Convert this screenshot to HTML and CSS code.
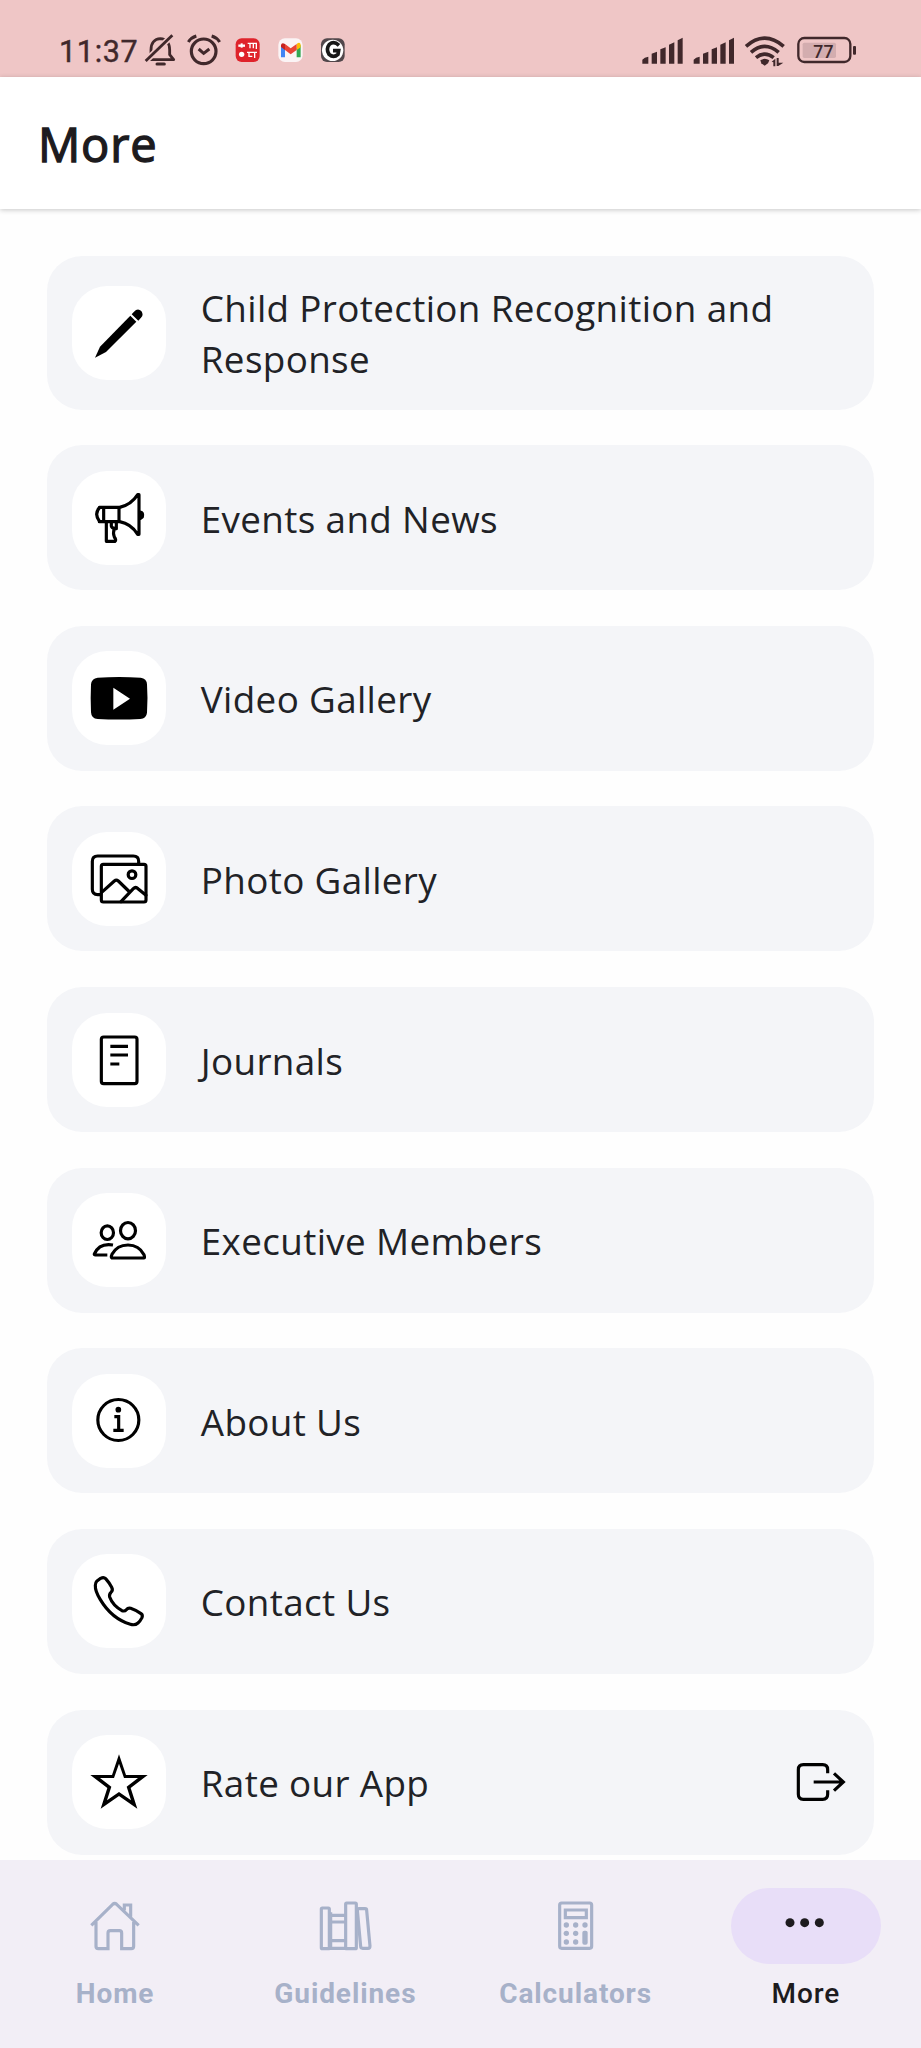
FILE: index.html
```html
<!DOCTYPE html>
<html lang="en">
<head>
<meta charset="utf-8">
<title>More</title>
<link rel="stylesheet" href="styles.css">
</head>
<body>
<div class="screen">
  <div class="status">
    <div class="status-left">
      <span class="clock">11:37</span>
      <svg class="status-icons" viewBox="310 0 620 171" width="206.67" height="57">
        <g fill="none" stroke="#40282b" stroke-width="8.5">
          <path d="M334 116V90c0-20 10-33 28-34 18 1 28 14 28 34v14l12 15H330" stroke-linejoin="round"/>
          <path d="M318 123L398 46" stroke="#efc6c6" stroke-width="18"/>
          <path d="M318 123L398 46"/>
          <path d="M352 132h22" stroke-width="9" stroke-linecap="round"/>
          <circle cx="492" cy="94" r="37" stroke-width="9.5"/>
          <path d="M477 87l15 13 17-13" stroke-width="9"/>
          <path d="M446 66q8-13 24-18M540 66q-8-13-24-18" stroke-width="9"/>
        </g>
        <rect x="588" y="55" width="72" height="71" rx="18" fill="#df232b"/>
        <g fill="none" stroke="#fff" stroke-width="4"><path d="M596 77h20" stroke-width="7"/><path d="M606 70v13" stroke-width="6"/><path d="M624 70h28M631 70v15M641 70v15M650 70v17M622 97h30M628 97v12h10M645 97v17"/></g>
        <circle cx="606" cy="103" r="8" fill="#fff"/>
        <rect x="716" y="55" width="73" height="71" rx="20" fill="#fbf4f5"/>
        <path d="M724 75v37h12V84z" fill="#4285f4"/><path d="M771 84v28h12V75z" fill="#34a853"/><path d="M771 72v18l12-8v-8q-2-10-12-2z" fill="#fbbc04"/><path d="M736 72v18l17 13 18-13V72l-18 13z" fill="#ea4335"/><path d="M724 75q2-9 12-3v18l-12-9z" fill="#c5221f"/>
        <rect x="844" y="55" width="71" height="71" rx="18" fill="#51474b"/>
        <circle cx="879" cy="91" r="32" fill="#fff"/>
        <path d="M898 76q-15-14-29-3-11 14-1 30 14 12 27 0l2-11h-17" fill="none" stroke="#171717" stroke-width="11"/>
      </svg>
    </div>
    <div class="status-right">
      <svg viewBox="60 0 660 171" width="220" height="57">
        <g fill="#40282b">
          <path d="M67 131v-12q6-8 18-9v21zM95 131v-30l16-6v36zM121 131V88l16-6v49zM147 131V74l16-7v64zM173 131V61l15-8v78z"/>
          <path d="M221 131v-12q6-8 18-9v21zM249 131v-30l16-6v36zM275 131V88l16-6v49zM301 131V74l16-7v64zM327 131V61l15-8v78z"/>
          <path d="M421 121q13-9 27 0l-4 9-10 7-10-7z"/>
          <path d="M455 125l11-9v23h-6v-12zM470 114h6v14h14l-15 10h-5z"/>
        </g>
        <g fill="none" stroke="#40282b" stroke-width="11">
          <path d="M378 79q56-49 113 0M393 97q41-36 83 0M408 113q26-21 53 0"/>
          <rect x="535" y="54" width="156" height="72" rx="18" stroke-width="7"/>
        </g>
        <rect x="548" y="68" width="100" height="46" rx="5" fill="#d3adaf"/>
        <rect x="699" y="78" width="9" height="26" rx="3" fill="#40282b"/>
        <text class="battery" x="580" y="113" textLength="61">77</text>
      </svg>
    </div>
  </div>

  <header class="header"><h1 class="title">More</h1></header>

  <main class="list">
    <div class="card">
      <svg class="tile" viewBox="216 589 282 282"><path d="M285 804l15-33 91-93 18 18-91 91z"/><path d="M395 674l7-8q11-12 22-2 8 12-1 20l-8 9z"/></svg>
      <span class="label">Child Protection Recognition and Response</span>
    </div>
    <div class="card">
      <svg class="tile line" viewBox="67 90 282 282"><path d="M149 199h63M149 242h63M162 199v43M208 199v43M150 199q-18 20 0 43M210 199q34-7 54-38h4v119h-4q-20-32-54-38"/><path d="M272 213q9 1 6 15l-6 4z"/><path d="M170 243v58h26q5-3-2-13-5-12 0-25h6v-21M185 243v12q1 7 12 7"/></svg>
      <span class="label">Events and News</span>
    </div>
    <div class="card">
      <svg class="tile" viewBox="67 632 282 282"><path fill-rule="evenodd" d="M144 712Q208 708 273 712q18 2 19 20 3 43 0 85-2 18-20 19-64 3-128 0-19-1-20-20-2-42 0-84 2-18 20-20zM191 742v66l50-33z"/></svg>
      <span class="label">Video Gallery</span>
    </div>
    <div class="card">
      <svg class="tile line" viewBox="67 94 282 282"><path d="M267 189v-7q0-16-16-16H144q-16 0-16 16v84q0 16 16 16h9"/><rect x="155" y="191" width="134" height="113" rx="6"/><circle cx="247" cy="222" r="11.5"/><path d="M156 275l38-34q6-5 12 0l34 33M214 303l37-39q7-7 14 0l24 20"/></svg>
      <span class="label">Photo Gallery</span>
    </div>
    <div class="card">
      <svg class="tile line" viewBox="67 635 282 282"><rect x="155" y="707" width="107" height="140" rx="7"/><path stroke-linecap="butt" d="M182 735h53M182 761h53M182 788h27"/></svg>
      <span class="label">Journals</span>
    </div>
    <div class="card">
      <svg class="tile line" viewBox="67 98 282 282"><ellipse cx="173" cy="217" rx="18.5" ry="20.5"/><ellipse cx="235" cy="211" rx="22.5" ry="24.5"/><path d="M187 293q-4-2 0-11 15-28 48-28t48 29q3 10 0 10zM190 254q-41-7-56 27-1 3 3 3h36" stroke-linecap="butt"/></svg>
      <span class="label">Executive Members</span>
    </div>
    <div class="card">
      <svg class="tile line" viewBox="67 642 282 282"><circle cx="206" cy="780" r="61.5"/><circle cx="206" cy="749" r="8.5" fill="#000" stroke="none"/><path d="M194 770h13v40M191 811h31" stroke-linecap="butt" stroke-linejoin="miter"/></svg>
      <span class="label">About Us</span>
    </div>
    <div class="card">
      <svg class="tile line" viewBox="67 102 282 282"><path d="M141 184l12-9q9-5 15 1 10 11 18 26 5 9-2 15-6 6-4 14 9 25 37 41 8 3 13-3 5-6 13-4 15 5 31 16 6 4 3 12-5 10-12 16-9 8-23 4-56-17-90-74-16-26-15-43 0-8 4-12z"/></svg>
      <span class="label">Contact Us</span>
    </div>
    <div class="card">
      <svg class="tile" viewBox="67 645 282 282"><path fill-rule="evenodd" d="M208 703l21 62h65l-51 39 20 62-55-38-55 38 20-62-51-39h65zM208 731l-15 43h-42l34 26-13 41 36-25 36 25-13-41 34-26h-42z"/></svg>
      <span class="label">Rate our App</span>
      <svg class="exit" viewBox="1010 185 150 120"><path d="M1105 219v-11q0-15-15-15h-58q-15 0-15 15v74q0 15 15 15h58q15 0 15-15v-12M1063 245h89M1124 219l28 26-28 26"/></svg>
    </div>
  </main>

  <nav class="nav">
    <div class="nav-item">
      <span class="pill"><svg viewBox="265 150 160 160" width="53.33" height="53.33"><path d="M275 229l64-63q6-5 12 0l66 63M289 219v73q0 7 7 7h29v-47q0-7 7-7h27q7 0 7 7v47h29q7 0 7-7v-73M374 184v-16h19v35"/></svg></span>
      <span class="nav-label">Home</span>
    </div>
    <div class="nav-item">
      <span class="pill"><svg viewBox="956 150 160 160" width="53.33" height="53.33"><rect x="963" y="177" width="24" height="122" rx="3"/><path d="M989 199h46M989 219h46M989 275h46M989 298h46M991 190v108"/><rect x="1036" y="162" width="32" height="137" rx="3"/><path d="M1071 183q0-4 5-4h18q5 0 5 5l10 107q0 7-6 7h-16q-6 0-6-6z"/></svg></span>
      <span class="nav-label">Guidelines</span>
    </div>
    <div class="nav-item">
      <span class="pill"><svg viewBox="267 600 160 160" width="53.33" height="53.33"><rect x="299" y="612" width="96" height="136" rx="6"/><path d="M316 633h63v23h-63z"/><g fill="#a7b1c9" stroke="none"><circle cx="319" cy="678" r="8"/><circle cx="347" cy="678" r="8"/><circle cx="375" cy="678" r="8"/><circle cx="319" cy="703" r="8"/><circle cx="347" cy="703" r="8"/><circle cx="319" cy="729" r="8"/><circle cx="347" cy="729" r="8"/><rect x="367" y="695" width="16" height="42" rx="6"/></g></svg></span>
      <span class="nav-label">Calculators</span>
    </div>
    <div class="nav-item active">
      <span class="pill"><svg viewBox="957 597 160 160" width="53.33" height="53.33"><circle cx="990" cy="668" r="13.5"/><circle cx="1034" cy="668" r="13.5"/><circle cx="1078" cy="668" r="13.5"/></svg></span>
      <span class="nav-label">More</span>
    </div>
  </nav>
</div>
</body>
</html>
```
FILE: styles.css
```css
* { box-sizing: border-box; }
body { margin: 0; background: #fff; }
svg { display: block; flex: none; }
.screen { width: 921px; height: 2048px; display: flex; flex-direction: column; overflow: hidden; background: #fefefe; }

.status { height: 77px; flex: none; display: flex; justify-content: space-between; align-items: flex-start; padding: 20px 61px 0 59px; background: #efc6c6; }
.status-left { display: flex; }
.clock { width: 84.3px; font: 400 30.5px/63px Roboto, sans-serif; letter-spacing: 0.7px; color: #40282b; -webkit-text-stroke: 0.4px #40282b; white-space: nowrap; }
.battery { font: 500 53px Roboto, sans-serif; fill: #40282b; }

.header { height: 132px; flex: none; display: flex; align-items: center; padding: 1px 38px 0; background: #fff; box-shadow: 0 1px 5px rgba(0, 0, 0, .22); position: relative; }
.title { margin: 0; font: 400 47px/64px "Open Sans", sans-serif; letter-spacing: 0.8px; -webkit-text-stroke: 1.3px #1d1b1e; color: #1d1b1e; }

.list { flex: 1; min-height: 0; display: flex; flex-direction: column; gap: 35.65px; padding: 47px 47px 0; }
.card { flex: none; min-height: 145px; display: flex; align-items: center; padding: 25.4px 28px 25.4px 25.3px; border-radius: 35px; background: #f4f5f8; }
.card:first-child { min-height: 153.5px; }
.tile { width: 94px; height: 94px; border-radius: 35px; background: #fff; }
.line { fill: none; stroke: #000; stroke-width: 9.5; stroke-linecap: round; stroke-linejoin: round; }
.label { flex: 1; margin-left: 34.5px; padding-top: 2px; margin-bottom: -1px; font: 400 36.8px/51px "Open Sans", sans-serif; letter-spacing: 0.36px; color: #212226; }
.card:first-child .label { margin-top: -1px; }
.exit { width: 50px; height: 40px; fill: none; stroke: #000; stroke-width: 9.5; }

.nav { height: 188px; flex: none; display: grid; grid-template-columns: repeat(4, 1fr); padding-top: 28px; background: #f2eef6; }
.nav-item { display: flex; flex-direction: column; align-items: center; color: #a7b1c9; }
.pill { width: 150px; height: 76px; display: flex; align-items: center; justify-content: center; border-radius: 38px; }
.pill svg { fill: none; stroke: #a7b1c9; stroke-width: 9.5; }
.nav-label { margin-top: 13px; font: 700 28px/34px Roboto, sans-serif; letter-spacing: 0.9px; }
.active { color: #1d1b1e; }
.active .pill { background: #e8def8; }
.active .pill svg { fill: #1d1b1e; stroke: none; }
.active .nav-label { font-weight: 500; }
```
